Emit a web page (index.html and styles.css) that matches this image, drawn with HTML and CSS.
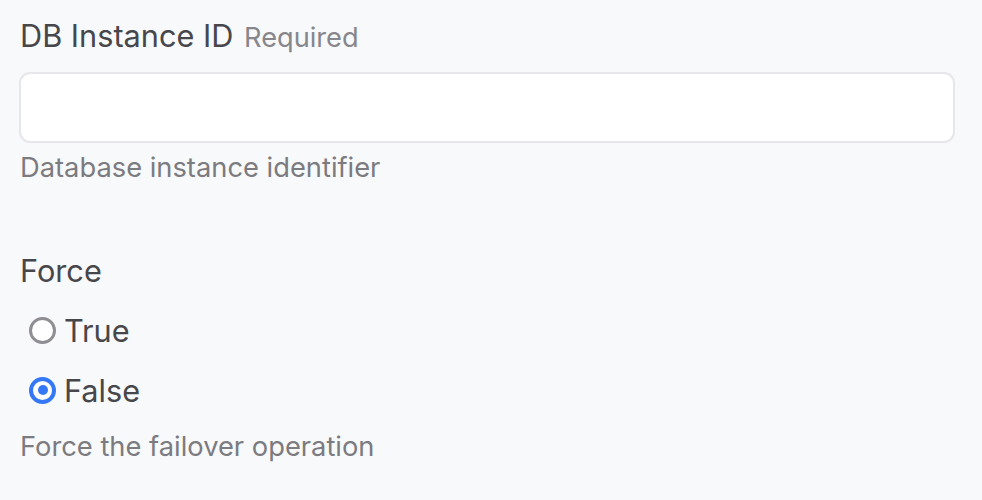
FILE: index.html
```html
<!DOCTYPE html>
<html>
<head>
<meta charset="utf-8">
<link rel="stylesheet" href="styles.css">
</head>
<body>
<form class="form">
  <div class="field">
    <label class="label" for="dbid">DB Instance ID <span class="req">Required</span></label>
    <input class="input" id="dbid" type="text">
    <div class="help">Database instance identifier</div>
  </div>
  <div class="field field-force">
    <div class="label">Force</div>
    <div class="options">
      <label class="option"><span class="radio"></span><span class="opt-text">True</span></label>
      <label class="option"><span class="radio checked"></span><span class="opt-text">False</span></label>
    </div>
    <div class="help help-force">Force the failover operation</div>
  </div>
</form>
</body>
</html>
```
FILE: styles.css
```css
html, body {
  margin: 0;
  background: #f8f9fb;
}
body {
  font-family: Inter, "Liberation Sans", Arial, sans-serif;
  color: #47474b;
}
.form {
  padding: 16px 27px 0 19px;
}
.field {
  display: flex;
  flex-direction: column;
}
.label {
  font-size: 30.7px;
  line-height: 40px;
  color: #47474b;
  padding-left: 1px;
}
.req {
  font-size: 27.2px;
  color: #86868b;
  margin-left: 2px;
}
.input {
  margin: 14px 0 0 0;
  height: 71px;
  box-sizing: border-box;
  border: 2px solid #e7e7eb;
  border-radius: 11px;
  background: #fff;
  outline: none;
  font: inherit;
}
.help {
  font-size: 27.3px;
  line-height: 36px;
  color: #7b7b80;
  margin-top: 7px;
  padding-left: 1px;
}
.field-force {
  margin-top: 65px;
}
.options {
  display: flex;
  flex-direction: column;
  gap: 20px;
  margin-top: 19px;
  padding-left: 10px;
}
.option {
  display: flex;
  align-items: center;
  gap: 8px;
  height: 40px;
  font-size: 30.7px;
  color: #47474b;
}
.radio {
  width: 27px;
  height: 27px;
  box-sizing: border-box;
  border: 3.5px solid #8e8e93;
  border-radius: 50%;
  background: #fff;
  display: flex;
  align-items: center;
  justify-content: center;
}
.radio.checked {
  border: 4px solid #3478f6;
}
.radio.checked::after {
  content: "";
  width: 10px;
  height: 10px;
  border-radius: 50%;
  background: #3478f6;
}
.help-force {
  margin-top: 19px;
}
```
